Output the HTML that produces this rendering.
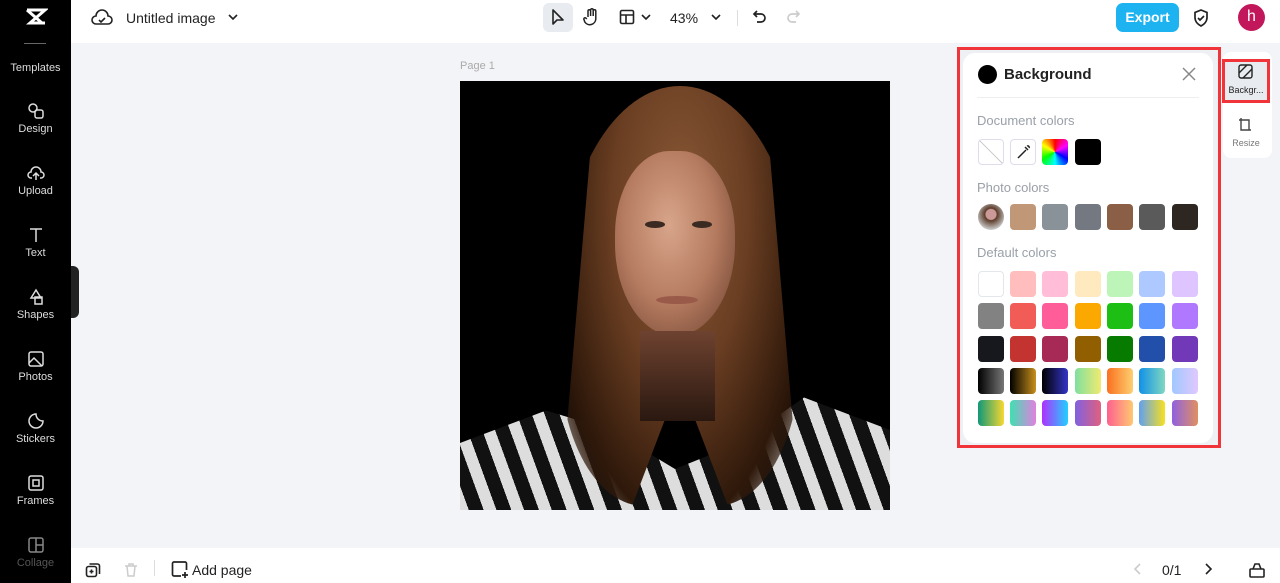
<!DOCTYPE html><html><head><meta charset="utf-8"><style>
*{box-sizing:border-box;margin:0;padding:0}
body{width:1280px;height:583px;overflow:hidden;font-family:"Liberation Sans",sans-serif;background:#f2f4f7;position:relative}
.abs{position:absolute}
.side{left:0;top:0;width:71px;height:583px;background:#000}
.si{position:absolute;left:0;width:71px;text-align:center;color:#ddd;font-size:11px}
.si svg{display:block;margin:0 auto 3px}
.top{left:71px;top:0;width:1209px;height:43px;background:#fff}
.bot{left:71px;top:548px;width:1209px;height:35px;background:#fff}
.sw{position:absolute;width:26px;height:26px;border-radius:4px}
.lbl{position:absolute;left:977px;font-size:13px;color:#9aa0a8}
</style></head><body>
<div class="abs side">
 <svg class="abs" style="left:24px;top:6px" width="24" height="22" viewBox="0 0 24 22"><path d="M3 4h18L6 17h15M3 17h0M3 4l15 13" stroke="#fff" stroke-width="3" fill="none"/></svg>
 <div class="abs" style="left:24px;top:43px;width:22px;height:1px;background:#666"></div>
 <div class="si" style="top:62px">Templates</div>
 <div class="si" style="top:102px"><svg width="18" height="18" viewBox="0 0 18 18" fill="none" stroke="#ddd" stroke-width="1.5"><circle cx="6" cy="6" r="4"/><rect x="8" y="8" width="8" height="8" rx="2"/></svg>Design</div>
 <div class="si" style="top:164px"><svg width="18" height="18" viewBox="0 0 18 18" fill="none" stroke="#ddd" stroke-width="1.5"><path d="M5 14H4a3 3 0 010-6 5 5 0 0110 0 3 3 0 010 6h-1M9 16V9M6 12l3-3 3 3"/></svg>Upload</div>
 <div class="si" style="top:226px"><svg width="18" height="18" viewBox="0 0 18 18" fill="none" stroke="#ddd" stroke-width="1.5"><path d="M3 3h12M9 3v13"/></svg>Text</div>
 <div class="si" style="top:288px"><svg width="18" height="18" viewBox="0 0 18 18" fill="none" stroke="#ddd" stroke-width="1.5"><path d="M9 2l5 8H4z"/><rect x="8" y="9" width="7" height="7"/></svg>Shapes</div>
 <div class="si" style="top:350px"><svg width="18" height="18" viewBox="0 0 18 18" fill="none" stroke="#ddd" stroke-width="1.5"><rect x="2" y="2" width="14" height="14" rx="2"/><path d="M2 13l5-5 8 8"/></svg>Photos</div>
 <div class="si" style="top:412px"><svg width="18" height="18" viewBox="0 0 18 18" fill="none" stroke="#ddd" stroke-width="1.5"><path d="M16 9A7 7 0 119 2c0 4 3 7 7 7z"/></svg>Stickers</div>
 <div class="si" style="top:474px"><svg width="18" height="18" viewBox="0 0 18 18" fill="none" stroke="#ddd" stroke-width="1.5"><rect x="2" y="2" width="14" height="14" rx="2"/><rect x="6" y="6" width="6" height="6"/></svg>Frames</div>
 <div class="si" style="top:536px;color:#555"><svg width="18" height="18" viewBox="0 0 18 18" fill="none" stroke="#888" stroke-width="1.5"><rect x="2" y="2" width="14" height="14" rx="2"/><path d="M9 2v14M9 9h7"/></svg>Collage</div>
</div>
<div class="abs" style="left:71px;top:266px;width:8px;height:52px;background:#222;border-radius:0 6px 6px 0"></div>
<div class="abs top">
 <svg class="abs" style="left:20px;top:8px" width="22" height="20" viewBox="0 0 22 20" fill="none" stroke="#222" stroke-width="1.6"><path d="M6 16H5a4 4 0 010-8 6 6 0 0112 0 4 4 0 010 8z"/><path d="M8 12l2 2 4-4"/></svg>
 <div class="abs" style="left:55px;top:10px;font-size:14px;color:#222">Untitled image</div>
 <svg class="abs" style="left:157px;top:13px" width="10" height="8" viewBox="0 0 10 8"><path d="M1 2l4 4 4-4" stroke="#222" stroke-width="1.6" fill="none"/></svg>
 <div class="abs" style="left:472px;top:3px;width:30px;height:29px;background:#e8ecf0;border-radius:6px"></div>
 <svg class="abs" style="left:479px;top:8px" width="16" height="18" viewBox="0 0 16 18"><path d="M3 2v14l4-4h6z" stroke="#222" stroke-width="1.6" fill="none" stroke-linejoin="round"/></svg>
 <svg class="abs" style="left:512px;top:7px" width="18" height="20" viewBox="0 0 18 20" fill="none" stroke="#222" stroke-width="1.5"><path d="M5 10V4a1.3 1.3 0 012.6 0v5V3a1.3 1.3 0 012.6 0v6V4a1.3 1.3 0 012.6 0v7 1a6 6 0 01-11 3l-1-3c0-1 1-1.5 2-1l1 1"/></svg>
 <svg class="abs" style="left:548px;top:9px" width="16" height="16" viewBox="0 0 16 16" fill="none" stroke="#222" stroke-width="1.6"><rect x="1.5" y="1.5" width="13" height="13" rx="1.5"/><path d="M1.5 6h13M7 6v8.5"/></svg>
 <svg class="abs" style="left:570px;top:13px" width="10" height="8" viewBox="0 0 10 8"><path d="M1 2l4 4 4-4" stroke="#222" stroke-width="1.6" fill="none"/></svg>
 <div class="abs" style="left:599px;top:10px;font-size:14px;color:#222">43%</div>
 <svg class="abs" style="left:640px;top:13px" width="10" height="8" viewBox="0 0 10 8"><path d="M1 2l4 4 4-4" stroke="#222" stroke-width="1.6" fill="none"/></svg>
 <div class="abs" style="left:666px;top:10px;width:1px;height:16px;background:#ddd"></div>
 <svg class="abs" style="left:681px;top:9px" width="16" height="16" viewBox="0 0 16 16" fill="none" stroke="#222" stroke-width="1.7"><path d="M5 2L2 5l3 3M2 5h7a4 4 0 010 8H5"/></svg>
 <svg class="abs" style="left:714px;top:9px" width="16" height="16" viewBox="0 0 16 16" fill="none" stroke="#ccc" stroke-width="1.7"><path d="M11 2l3 3-3 3M14 5H7a4 4 0 000 8h4"/></svg>
 <div class="abs" style="left:1045px;top:3px;width:63px;height:29px;background:#1cb3f0;border-radius:7px;color:#fff;font-weight:bold;font-size:14px;text-align:center;line-height:29px">Export</div>
 <svg class="abs" style="left:1121px;top:8px" width="18" height="20" viewBox="0 0 18 20" fill="none" stroke="#222" stroke-width="1.7"><path d="M9 2l6 2.5v5c0 4-3 7-6 8.5-3-1.5-6-4.5-6-8.5v-5z"/><path d="M6 10l2 2 4-4"/></svg>
 <div class="abs" style="left:1167px;top:4px;width:27px;height:27px;border-radius:50%;background:#c2185b;color:#fff;font-size:16px;text-align:center;line-height:26px">h</div>
</div>
<div class="abs" style="left:460px;top:60px;font-size:11px;color:#aaa">Page 1</div>
<div class="abs" style="left:460px;top:81px;width:430px;height:429px;background:#000;overflow:hidden">
 <div class="abs" style="left:0;top:310px;width:430px;height:130px;background:repeating-linear-gradient(70deg,#ddd 0 12px,#111 12px 26px);clip-path:polygon(0 40%,20% 15%,35% 30%,50% 60%,65% 40%,80% 5%,100% 30%,100% 100%,0 100%)"></div>
 <div class="abs" style="left:100px;top:5px;width:240px;height:420px;border-radius:50% 50% 35% 35%;background:radial-gradient(ellipse at 50% 30%,#8a5a38 0%,#6a3e22 40%,#2e180a 75%,rgba(0,0,0,0) 100%);clip-path:polygon(15% 0,85% 0,100% 100%,70% 100%,50% 70%,30% 100%,0 100%)"></div>
 <div class="abs" style="left:155px;top:70px;width:120px;height:185px;border-radius:45% 45% 50% 50%;background:radial-gradient(ellipse at 45% 40%,#d8a58a 0%,#b57b60 50%,#6e4230 95%)"></div>
 <div class="abs" style="left:185px;top:140px;width:20px;height:7px;border-radius:50%;background:#3a2a22"></div>
 <div class="abs" style="left:232px;top:140px;width:20px;height:7px;border-radius:50%;background:#3a2a22"></div>
 <div class="abs" style="left:196px;top:215px;width:42px;height:8px;border-radius:50%;background:#9a5a4a"></div>
 <div class="abs" style="left:180px;top:250px;width:75px;height:90px;background:linear-gradient(#6e4230,#2a1810)"></div>
</div>
<div class="abs bot">
 <svg class="abs" style="left:14px;top:14px" width="16" height="16" viewBox="0 0 16 16" fill="none" stroke="#222" stroke-width="1.6"><rect x="1.5" y="4.5" width="10" height="10" rx="2"/><path d="M4.5 2h8a2 2 0 012 2v8M6.5 7.5v4M4.5 9.5h4"/></svg>
 <svg class="abs" style="left:52px;top:14px" width="16" height="16" viewBox="0 0 16 16" fill="none" stroke="#ccc" stroke-width="1.5"><path d="M2 4h12M4 4l1 10h6l1-10M6 4V2h4v2"/></svg>
 <div class="abs" style="left:83px;top:12px;width:1px;height:16px;background:#ddd"></div>
 <svg class="abs" style="left:100px;top:13px" width="18" height="18" viewBox="0 0 18 18" fill="none" stroke="#222" stroke-width="1.7"><path d="M10 15H3a1.5 1.5 0 01-1.5-1.5v-11A1.5 1.5 0 013 1h11a1.5 1.5 0 011.5 1.5V9M14 11v6M11 14h6"/></svg>
 <div class="abs" style="left:121px;top:14px;font-size:14px;color:#222">Add page</div>
 <svg class="abs" style="left:1062px;top:15px" width="10" height="12" viewBox="0 0 10 12"><path d="M7 1L2 6l5 5" stroke="#ccc" stroke-width="1.6" fill="none"/></svg>
 <div class="abs" style="left:1091px;top:14px;font-size:14px;color:#222">0/1</div>
 <svg class="abs" style="left:1132px;top:15px" width="10" height="12" viewBox="0 0 10 12"><path d="M3 1l5 5-5 5" stroke="#222" stroke-width="1.6" fill="none"/></svg>
 <svg class="abs" style="left:1177px;top:13px" width="18" height="18" viewBox="0 0 18 18" fill="none" stroke="#222" stroke-width="1.6"><rect x="2" y="8" width="14" height="8" rx="1"/><path d="M5 8l2-5h4l2 5"/></svg>
</div>
<div class="abs" style="left:957px;top:47px;width:264px;height:401px;border:3px solid #f0343a;background:#eef0f3"></div>
<div class="abs" style="left:963px;top:53px;width:250px;height:390px;background:#fff;border-radius:12px"></div>
<div class="abs" style="left:978px;top:65px;width:19px;height:19px;border-radius:50%;background:#000"></div>
<div class="abs" style="left:1004px;top:66px;font-size:15px;font-weight:bold;color:#222">Background</div>
<svg class="abs" style="left:1182px;top:67px" width="14" height="14" viewBox="0 0 14 14"><path d="M1 1l12 12M13 1L1 13" stroke="#888" stroke-width="1.5"/></svg>
<div class="abs" style="left:977px;top:97px;width:222px;height:1px;background:#eee"></div>
<div class="lbl" style="top:113px">Document colors</div>
<div class="sw" style="left:978px;top:139px;border:1px solid #dde;background:linear-gradient(45deg,#fff 48%,#ccc 49%,#ccc 51%,#fff 52%)"></div>
<div class="sw" style="left:1010px;top:139px;border:1px solid #dde;background:#fff"><svg width="24" height="24" viewBox="0 0 24 24" fill="none" stroke="#222" stroke-width="1.5"><path d="M7 18l8-8M14 7l3 3M16 6a1.5 1.5 0 012 2"/></svg></div>
<div class="sw" style="left:1042px;top:139px;background:conic-gradient(red,magenta,blue,cyan,lime,yellow,red)"></div>
<div class="sw" style="left:1075px;top:139px;background:#000"></div>
<div class="lbl" style="top:180px">Photo colors</div>
<div class="sw" style="left:978px;top:204px;border-radius:50%;background:radial-gradient(circle at 50% 40%,#c99 0 25%,#5a3a28 30%,#ccc 75%)"></div>
<div class="sw" style="left:1010px;top:204px;background:#c09878"></div>
<div class="sw" style="left:1042px;top:204px;background:#8a9299"></div>
<div class="sw" style="left:1075px;top:204px;background:#737881"></div>
<div class="sw" style="left:1107px;top:204px;background:#8a5f45"></div>
<div class="sw" style="left:1139px;top:204px;background:#5a5a5a"></div>
<div class="sw" style="left:1172px;top:204px;background:#2e2620"></div>
<div class="lbl" style="top:245px">Default colors</div>
<div class="sw" style="left:978px;top:271px;background:#fff;border:1px solid #e3e6ea"></div>
<div class="sw" style="left:1010px;top:271px;background:#ffbdbd"></div>
<div class="sw" style="left:1042px;top:271px;background:#ffbdd8"></div>
<div class="sw" style="left:1075px;top:271px;background:#ffe9bf"></div>
<div class="sw" style="left:1107px;top:271px;background:#bdf5b8"></div>
<div class="sw" style="left:1139px;top:271px;background:#adc9ff"></div>
<div class="sw" style="left:1172px;top:271px;background:#dfc5ff"></div>
<div class="sw" style="left:978px;top:303px;background:#828282"></div>
<div class="sw" style="left:1010px;top:303px;background:#f25c57"></div>
<div class="sw" style="left:1042px;top:303px;background:#ff5c9a"></div>
<div class="sw" style="left:1075px;top:303px;background:#fba800"></div>
<div class="sw" style="left:1107px;top:303px;background:#1ebf14"></div>
<div class="sw" style="left:1139px;top:303px;background:#5e96ff"></div>
<div class="sw" style="left:1172px;top:303px;background:#b078ff"></div>
<div class="sw" style="left:978px;top:336px;background:#16181e"></div>
<div class="sw" style="left:1010px;top:336px;background:#c33430"></div>
<div class="sw" style="left:1042px;top:336px;background:#a72a56"></div>
<div class="sw" style="left:1075px;top:336px;background:#925f00"></div>
<div class="sw" style="left:1107px;top:336px;background:#077a00"></div>
<div class="sw" style="left:1139px;top:336px;background:#214faa"></div>
<div class="sw" style="left:1172px;top:336px;background:#7139b8"></div>
<div class="sw" style="left:978px;top:368px;background:linear-gradient(90deg,#000,#777)"></div>
<div class="sw" style="left:1010px;top:368px;background:linear-gradient(90deg,#000,#c8901c)"></div>
<div class="sw" style="left:1042px;top:368px;background:linear-gradient(90deg,#000,#3434c8)"></div>
<div class="sw" style="left:1075px;top:368px;background:linear-gradient(90deg,#7fe0a0,#f0ea70)"></div>
<div class="sw" style="left:1107px;top:368px;background:linear-gradient(90deg,#fb7020,#fcd070)"></div>
<div class="sw" style="left:1139px;top:368px;background:linear-gradient(90deg,#1090e8,#80d8c0)"></div>
<div class="sw" style="left:1172px;top:368px;background:linear-gradient(90deg,#a0c8ff,#e0c8ff)"></div>
<div class="sw" style="left:978px;top:400px;background:linear-gradient(90deg,#109878,#f8d830)"></div>
<div class="sw" style="left:1010px;top:400px;background:linear-gradient(90deg,#40e0b0,#e080e0)"></div>
<div class="sw" style="left:1042px;top:400px;background:linear-gradient(90deg,#b030ff,#20d0ff)"></div>
<div class="sw" style="left:1075px;top:400px;background:linear-gradient(90deg,#8060e0,#e06080)"></div>
<div class="sw" style="left:1107px;top:400px;background:linear-gradient(90deg,#ff6090,#ffc870)"></div>
<div class="sw" style="left:1139px;top:400px;background:linear-gradient(90deg,#60a0f0,#f8e020)"></div>
<div class="sw" style="left:1172px;top:400px;background:linear-gradient(90deg,#9060e0,#e09060)"></div>
<div class="abs" style="left:1223px;top:52px;width:49px;height:106px;background:#fff;border-radius:8px"></div>
<div class="abs" style="left:1222px;top:59px;width:48px;height:44px;border:3px solid #f0343a;background:#e8ebef"></div>
<svg class="abs" style="left:1238px;top:64px" width="15" height="15" viewBox="0 0 15 15" fill="none" stroke="#222" stroke-width="1.4"><rect x="1" y="1" width="13" height="13" rx="2"/><path d="M1 9l8-8M5 14l9-9"/></svg>
<div class="abs" style="left:1225px;top:85px;width:42px;text-align:center;font-size:9px;color:#222">Backgr...</div>
<svg class="abs" style="left:1238px;top:117px" width="15" height="15" viewBox="0 0 15 15" fill="none" stroke="#444" stroke-width="1.4"><path d="M3 1v12h10M1 3h10v10"/></svg>
<div class="abs" style="left:1225px;top:138px;width:42px;text-align:center;font-size:9px;color:#777">Resize</div>
</body></html>
